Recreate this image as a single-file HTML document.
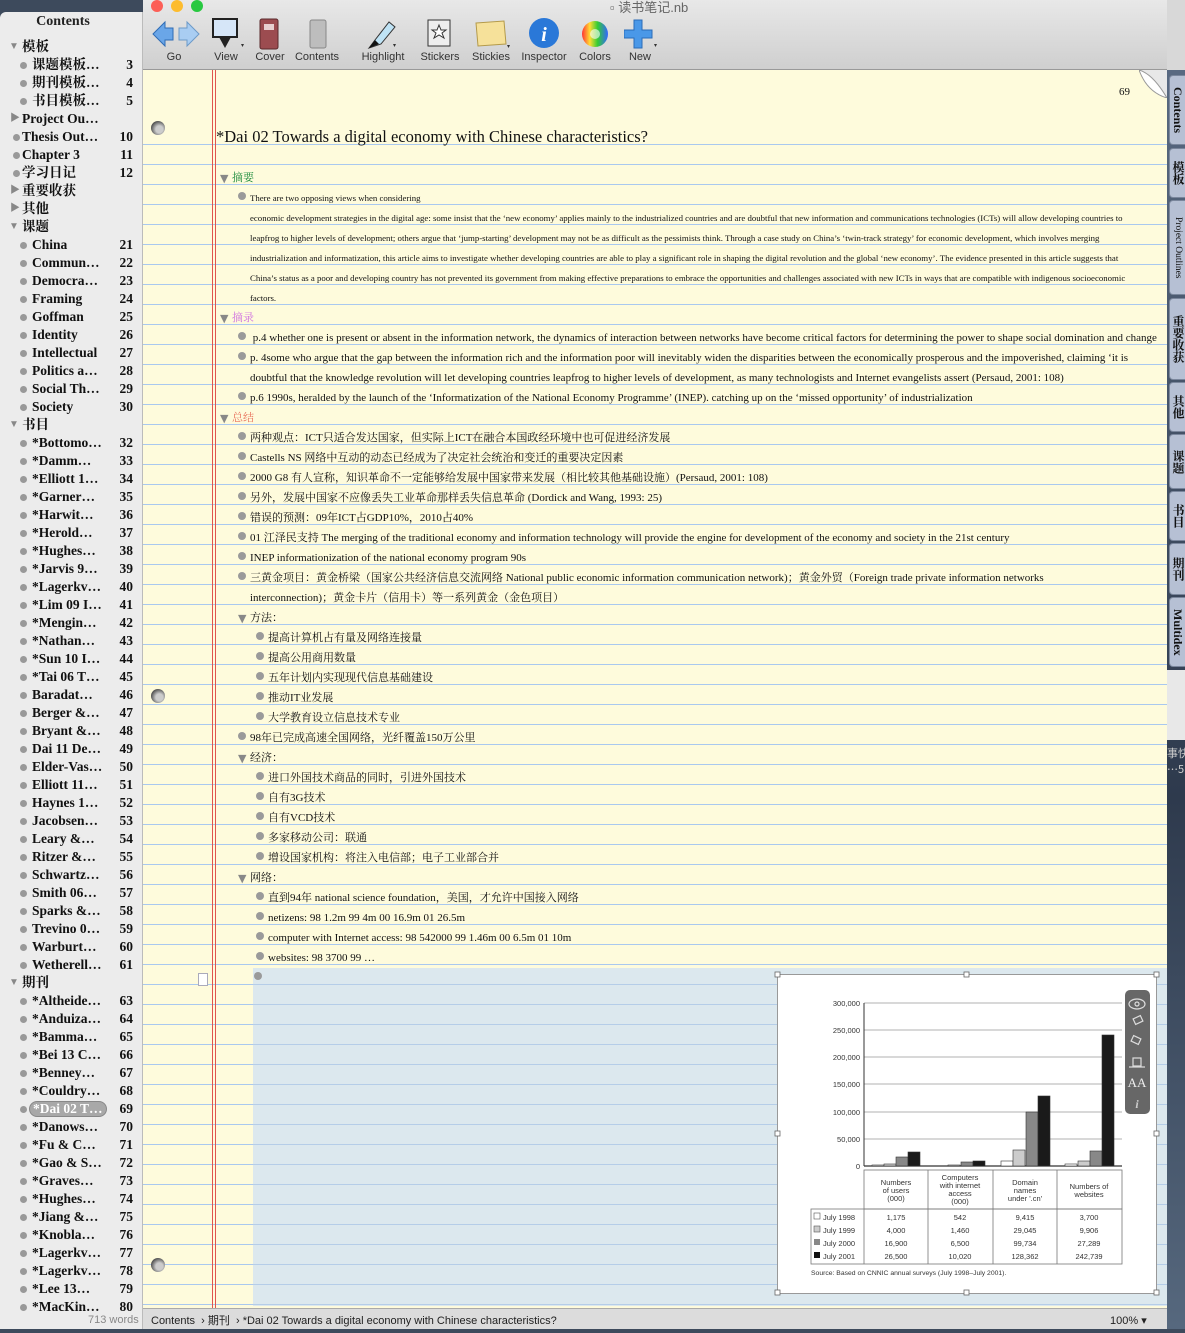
<!DOCTYPE html>
<html><head><meta charset="utf-8">
<style>
*{margin:0;padding:0;box-sizing:border-box}
body{width:1185px;height:1329px;overflow:hidden;position:relative;background:#3d4a5c;font-family:"Liberation Serif","Noto Serif CJK SC",serif;color:#111}
#side{position:absolute;left:0;top:12px;width:143px;height:1317px;background:#ececec;border-radius:6px 0 0 0;border-right:1px solid #bbb}
#side .h{position:absolute;top:2px;left:0;width:126px;text-align:center;font-weight:bold;font-size:14px;color:#222}
.si{position:absolute;height:18px;line-height:18px;font-size:13.5px;font-weight:bold;white-space:nowrap;color:#111}
.si .n{position:absolute;left:0;width:133px;text-align:right}
.b{display:inline-block;width:7px;height:7px;border-radius:50%;background:#999;position:absolute;top:6px}
.tri{position:absolute;font-size:10px;color:#888;top:0}
#tb{position:absolute;left:143px;top:0;width:1024px;height:70px;background:linear-gradient(#e8e8e8,#cfcfcf);border-bottom:1px solid #999}
#tb .lab{position:absolute;top:51px;font-family:"Liberation Sans",sans-serif;font-size:11px;color:#333;transform:translateX(-50%)}
#pg{position:absolute;left:143px;top:70px;width:1024px;height:1238px;background:#fefbdc}
.ln{position:absolute;left:143px;width:1024px;height:1px;background:#a9c8ef}
.row{position:absolute;height:20px;line-height:20px;white-space:nowrap;font-size:11px}
.row .t{position:absolute;top:4px}
.row .bb{position:absolute;top:8px;width:8px;height:8px;border-radius:50%;background:#9a9a9a}
.row .tr{position:absolute;top:5px;font-size:11px;color:#888;font-family:"DejaVu Sans",sans-serif}
.sm{font-size:8.8px}
#st{position:absolute;left:143px;top:1308px;width:1024px;height:21px;background:#dcdcdc;border-top:1px solid #aaa;font-family:"Liberation Sans","Noto Sans CJK SC",sans-serif;font-size:11px;line-height:24px;color:#222}
#rs{position:absolute;left:1167px;top:0;width:18px;height:1329px;background:linear-gradient(#5d6e86,#2e3a4d 60%,#56687e)}
.tab{position:absolute;left:1169px;width:16px;background:#b6c0d4;border:1px solid #7a869c;border-right:none;border-radius:4px 0 0 4px;writing-mode:vertical-rl;font-weight:bold;text-align:center;line-height:14px;color:#111;white-space:nowrap;overflow:hidden}
.dial{position:absolute;width:14px;height:14px;border-radius:50%;background:radial-gradient(circle at 60% 60%,#ccc 30%,#555 70%)}
</style></head><body>

<div id="side">
<div class="h">Contents</div>
</div>
<div id="sideitems"></div>

<div id="tb">
 <div style="position:absolute;left:8px;top:0;width:12px;height:12px;border-radius:50%;background:#fc5f57"></div>
 <div style="position:absolute;left:28px;top:0;width:12px;height:12px;border-radius:50%;background:#fdbc2e"></div>
 <div style="position:absolute;left:48px;top:0;width:12px;height:12px;border-radius:50%;background:#28c840"></div>
 <div style="position:absolute;left:467px;top:-3px;font-family:'Liberation Sans','Noto Sans CJK SC',sans-serif;font-size:13px;color:#666">▫ 读书笔记.nb</div>
 <svg style="position:absolute;left:8px;top:18px" width="50" height="32"><path d="M2 16 L14 4 V10 H22 V22 H14 V28Z" fill="#6aa6e8" stroke="#2f6cb5"/><path d="M48 16 L36 4 V10 H28 V22 H36 V28Z" fill="#a9cdf2" stroke="#6d9ac8"/></svg>
 <svg style="position:absolute;left:68px;top:18px" width="36" height="32"><rect x="2" y="1" width="24" height="18" fill="#d6e6f8" stroke="#222" stroke-width="2"/><path d="M8 19 L14 30 L20 19Z" fill="#222"/><path d="M30 26 l3 0 -1.5 3z" fill="#333"/></svg>
 <svg style="position:absolute;left:115px;top:18px" width="24" height="32"><rect x="2" y="1" width="18" height="30" rx="2" fill="#9c4c50" stroke="#5a2a2c"/><rect x="6" y="6" width="10" height="6" fill="#e8d0d0"/></svg>
 <svg style="position:absolute;left:165px;top:18px" width="20" height="32"><rect x="2" y="2" width="16" height="28" rx="2" fill="#bdbdbd" stroke="#888"/></svg>
 <svg style="position:absolute;left:222px;top:18px" width="34" height="32"><path d="M4 30 L10 22 L24 4 L30 9 L16 26 Z" fill="#bfe3f5" stroke="#333"/><path d="M4 30 L10 22 L14 26Z" fill="#111"/><path d="M28 26 l3 0 -1.5 3z" fill="#333"/></svg>
 <svg style="position:absolute;left:283px;top:18px" width="28" height="30"><rect x="2" y="2" width="22" height="26" fill="#eee" stroke="#333"/><path d="M13 7 l2 5 5 0 -4 3 2 5 -5 -3 -5 3 2 -5 -4 -3 5 0z" fill="#fff" stroke="#333"/></svg>
 <svg style="position:absolute;left:331px;top:20px" width="38" height="30"><path d="M2 3 L30 1 L32 24 L4 26Z" fill="#f6e19a" stroke="#b49a4a"/><path d="M33 25 l3 0 -1.5 3z" fill="#333"/></svg>
 <svg style="position:absolute;left:385px;top:17px" width="32" height="32"><circle cx="16" cy="16" r="15" fill="#2a78d8"/><text x="16" y="24" font-family="Liberation Serif" font-style="italic" font-weight="bold" font-size="20" fill="#fff" text-anchor="middle">i</text></svg>
 <svg style="position:absolute;left:438px;top:20px" width="28" height="28"><defs><linearGradient id="cw" x1="0" x2="1"><stop offset="0" stop-color="#f33"/><stop offset=".3" stop-color="#fd3"/><stop offset=".6" stop-color="#3c3"/><stop offset="1" stop-color="#36f"/></linearGradient></defs><circle cx="14" cy="14" r="13" fill="url(#cw)"/><circle cx="14" cy="14" r="5" fill="#fff" opacity=".6"/></svg>
 <svg style="position:absolute;left:481px;top:18px" width="36" height="32"><path d="M10 2 h8 v10 h10 v8 h-10 v10 h-8 v-10 h-10 v-8 h10z" fill="#4a98e8" stroke="#2a6cb8"/><path d="M30 26 l3 0 -1.5 3z" fill="#333"/></svg>
 <div class="lab" style="left:31px">Go</div><div class="lab" style="left:83px">View</div><div class="lab" style="left:127px">Cover</div><div class="lab" style="left:174px">Contents</div><div class="lab" style="left:240px">Highlight</div><div class="lab" style="left:297px">Stickers</div><div class="lab" style="left:348px">Stickies</div><div class="lab" style="left:401px">Inspector</div><div class="lab" style="left:452px">Colors</div><div class="lab" style="left:497px">New</div>
</div>

<div id="pg"></div>
<div id="lines"></div>
<div style="position:absolute;left:253px;top:968px;width:914px;height:338px;background:#dce8ee"></div>
<div id="lines2"></div>
<div style="position:absolute;left:212px;top:70px;width:1px;height:1238px;background:#e0554f"></div>
<div style="position:absolute;left:215px;top:70px;width:1px;height:1238px;background:#e0554f"></div>
<svg style="position:absolute;left:1139px;top:70px" width="28" height="28"><path d="M0 0 H28 V28Z" fill="#e8e8e8"/><path d="M0 0 Q14 4 28 28 Q8 22 0 0Z" fill="#fff" stroke="#999"/></svg>
<div style="position:absolute;left:1119px;top:86px;font-size:11px">69</div>
<div style="position:absolute;left:216px;top:127px;font-size:16.5px;white-space:nowrap">*Dai 02 Towards a digital economy with Chinese characteristics?</div>
<div class="dial" style="left:151px;top:121px"></div>
<div class="dial" style="left:151px;top:689px"></div>
<div class="dial" style="left:151px;top:1258px"></div>
<div style="position:absolute;left:198px;top:973px;width:10px;height:13px;background:#fff;border:1px solid #aab"></div>
<div id="rows"></div>

<!-- chart -->
<div style="position:absolute;left:777px;top:974px;width:380px;height:320px;background:#fff;border:1px solid #999"></div>
<svg style="position:absolute;left:770px;top:965px" width="400" height="340" font-family="Liberation Sans,sans-serif" font-size="7.5" fill="#333">
 <g stroke="#999" stroke-width=".8">
  <line x1="94" y1="38" x2="352" y2="38"/><line x1="94" y1="65" x2="352" y2="65"/><line x1="94" y1="92" x2="352" y2="92"/><line x1="94" y1="119" x2="352" y2="119"/><line x1="94" y1="147" x2="352" y2="147"/><line x1="94" y1="174" x2="352" y2="174"/>
 </g>
 <line x1="94" y1="38" x2="94" y2="201" stroke="#333"/><line x1="94" y1="201" x2="352" y2="201" stroke="#333" stroke-width="1.2"/>
 <g text-anchor="end"><text x="90" y="41">300,000</text><text x="90" y="68">250,000</text><text x="90" y="95">200,000</text><text x="90" y="122">150,000</text><text x="90" y="150">100,000</text><text x="90" y="177">50,000</text><text x="90" y="204">0</text></g>
 <g stroke="#333" stroke-width=".6">
  <rect x="102" y="200" width="12" height="1" fill="#fff"/><rect x="114" y="199" width="12" height="2" fill="#ccc"/><rect x="126" y="192" width="12" height="9" fill="#888"/><rect x="138" y="187" width="12" height="14" fill="#1a1a1a"/>
  <rect x="178" y="200" width="12" height="1" fill="#ccc"/><rect x="191" y="197" width="12" height="4" fill="#888"/><rect x="203" y="196" width="12" height="5" fill="#1a1a1a"/>
  <rect x="231" y="196" width="12" height="5" fill="#fff"/><rect x="243" y="185" width="12" height="16" fill="#ccc"/><rect x="256" y="147" width="12" height="54" fill="#888"/><rect x="268" y="131" width="12" height="70" fill="#1a1a1a"/>
  <rect x="295" y="199" width="12" height="2" fill="#fff"/><rect x="308" y="196" width="12" height="5" fill="#ccc"/><rect x="320" y="186" width="12" height="15" fill="#888"/><rect x="332" y="70" width="12" height="131" fill="#1a1a1a"/>
 </g>
 <g stroke="#777" fill="none" stroke-width=".8">
  <rect x="94" y="205" width="258" height="39"/><rect x="41" y="244" width="311" height="55"/>
  <line x1="94" y1="244" x2="94" y2="299"/><line x1="158" y1="205" x2="158" y2="299"/><line x1="223" y1="205" x2="223" y2="299"/><line x1="287" y1="205" x2="287" y2="299"/>
 </g>
 <g text-anchor="middle">
  <text x="126" y="220">Numbers</text><text x="126" y="228">of users</text><text x="126" y="236">(000)</text>
  <text x="190" y="215">Computers</text><text x="190" y="223">with internet</text><text x="190" y="231">access</text><text x="190" y="239">(000)</text>
  <text x="255" y="220">Domain</text><text x="255" y="228">names</text><text x="255" y="236">under '.cn'</text>
  <text x="319" y="224">Numbers of</text><text x="319" y="232">websites</text>
  <text x="126" y="255">1,175</text><text x="190" y="255">542</text><text x="255" y="255">9,415</text><text x="319" y="255">3,700</text>
  <text x="126" y="268">4,000</text><text x="190" y="268">1,460</text><text x="255" y="268">29,045</text><text x="319" y="268">9,906</text>
  <text x="126" y="281">16,900</text><text x="190" y="281">6,500</text><text x="255" y="281">99,734</text><text x="319" y="281">27,289</text>
  <text x="126" y="294">26,500</text><text x="190" y="294">10,020</text><text x="255" y="294">128,362</text><text x="319" y="294">242,739</text>
 </g>
 <rect x="44" y="248" width="6" height="6" fill="#fff" stroke="#555" stroke-width=".6"/><rect x="44" y="261" width="6" height="6" fill="#ccc" stroke="#555" stroke-width=".6"/><rect x="44" y="274" width="6" height="6" fill="#888"/><rect x="44" y="287" width="6" height="6" fill="#111"/>
 <text x="53" y="255">July 1998</text><text x="53" y="268">July 1999</text><text x="53" y="281">July 2000</text><text x="53" y="294">July 2001</text>
 <text x="41" y="310" font-size="6.8">Source: Based on CNNIC annual surveys (July 1998–July 2001).</text>
 <g fill="#fff" stroke="#666" stroke-width=".8"><rect x="5" y="7" width="5" height="5"/><rect x="194" y="7" width="5" height="5"/><rect x="384" y="7" width="5" height="5"/><rect x="5" y="166" width="5" height="5"/><rect x="384" y="166" width="5" height="5"/><rect x="5" y="325" width="5" height="5"/><rect x="194" y="325" width="5" height="5"/><rect x="384" y="325" width="5" height="5"/></g>
 <rect x="355" y="25" width="25" height="124" rx="5" fill="#5a5a5a" opacity=".92"/>
 <g stroke="#ddd" fill="none" stroke-width="1.2"><ellipse cx="367" cy="39" rx="8" ry="5"/><circle cx="367" cy="39" r="2"/><rect x="364" y="52" width="8" height="6" transform="rotate(-25 368 55)"/><rect x="362" y="72" width="8" height="6" transform="rotate(25 366 75)"/><line x1="359" y1="102" x2="375" y2="102"/><rect x="363" y="93" width="8" height="8"/></g>
 <text x="367" y="122" fill="#eee" font-family="Liberation Serif" font-size="13" text-anchor="middle">AA</text>
 <text x="367" y="143" fill="#ccc" font-family="Liberation Serif" font-style="italic" font-weight="bold" font-size="12" text-anchor="middle">i</text>
</svg>

<div id="st"><span style="position:absolute;left:8px">Contents &nbsp;›&nbsp;期刊 &nbsp;›&nbsp;*Dai 02 Towards a digital economy with Chinese characteristics?</span><span style="position:absolute;left:967px">100% ▾</span></div>
<div style="position:absolute;left:88px;top:1314px;font-family:'Liberation Sans',sans-serif;font-size:11px;color:#888">713 words</div>

<div id="rs"></div>
<div style="position:absolute;left:1167px;top:0;width:18px;height:70px;background:#d8d8d8"></div>
<div id="tabs"></div>
<div style="position:absolute;left:1167px;top:670px;width:18px;height:70px;background:#e8e8e8"></div>
<div style="position:absolute;left:1167px;top:745px;width:18px;overflow:hidden;font-size:11px;color:#ccc;font-family:'Noto Sans CJK SC',sans-serif;line-height:16px;white-space:nowrap">事快<br>…5</div>

<script>
var S=document.getElementById('sideitems'),h='';
var items=[[0,'t','模板'],[1,'b','课题模板…','3'],[1,'b','期刊模板…','4'],[1,'b','书目模板…','5'],[0,'r','Project Ou…'],[0,'b','Thesis Out…','10'],[0,'b','Chapter 3','11'],[0,'b','学习日记','12'],[0,'r','重要收获'],[0,'r','其他'],[0,'t','课题']];
['China|21','Commun…|22','Democra…|23','Framing|24','Goffman|25','Identity|26','Intellectual|27','Politics a…|28','Social Th…|29','Society|30'].forEach(function(s){var p=s.split('|');items.push([1,'b',p[0],p[1]])});
items.push([0,'t','书目']);
['*Bottomo…|32','*Damm…|33','*Elliott 1…|34','*Garner…|35','*Harwit…|36','*Herold…|37','*Hughes…|38','*Jarvis 9…|39','*Lagerkv…|40','*Lim 09 I…|41','*Mengin…|42','*Nathan…|43','*Sun 10 I…|44','*Tai 06 T…|45','Baradat…|46','Berger &…|47','Bryant &…|48','Dai 11 De…|49','Elder-Vas…|50','Elliott 11…|51','Haynes 1…|52','Jacobsen…|53','Leary &…|54','Ritzer &…|55','Schwartz…|56','Smith 06…|57','Sparks &…|58','Trevino 0…|59','Warburt…|60','Wetherell…|61'].forEach(function(s){var p=s.split('|');items.push([1,'b',p[0],p[1]])});
items.push([0,'t','期刊']);
['*Altheide…|63','*Anduiza…|64','*Bamma…|65','*Bei 13 C…|66','*Benney…|67','*Couldry…|68','*Dai 02 T…|69','*Danows…|70','*Fu &amp; C…|71','*Gao &amp; S…|72','*Graves…|73','*Hughes…|74','*Jiang &amp;…|75','*Knobla…|76','*Lagerkv…|77','*Lagerkv…|78','*Lee 13…|79','*MacKin…|80'].forEach(function(s){var p=s.split('|');items.push([1,'b',p[0],p[1]])});
items.forEach(function(it,i){var y=38+i*18;var lv=it[0];var tx=lv?32:22;var ic='';
 if(it[1]=='t')ic='<span class="tri" style="left:9px">▼</span>';else if(it[1]=='r')ic='<span class="tri" style="left:10px">▶</span>';else ic='<span class="b" style="left:'+(lv?20:13)+'px"></span>';
 var sel=it[3]=='69';
 var lab=sel?'<span style="position:absolute;left:'+(tx-3)+'px;top:1px;background:#a8a8a8;border:1px solid #888;border-radius:8px;color:#fff;padding:0 3px;line-height:14px">'+it[2]+'</span>':'<span style="position:absolute;left:'+tx+'px">'+it[2]+'</span>';
 h+='<div class="si" style="left:0;top:'+y+'px;width:143px">'+ic+lab+(it[3]?'<span class="n">'+it[3]+'</span>':'')+'</div>';});
S.innerHTML=h;
var L='';for(var y=144;y<1306;y+=20){L+='<div class="ln" style="top:'+y+'px"></div>'}document.getElementById('lines').innerHTML=L;
var L2='';for(var y=984;y<1306;y+=20){L2+='<div class="ln" style="top:'+y+'px;left:253px;width:914px;background:#b5cde8"></div>'}document.getElementById('lines2').innerHTML=L2;
var R=[
['tr',220,'<span style="color:#1a8a3a">摘要</span>'],
['b',242,'<span class="sm">There are two opposing views when considering</span>',250],
['n',250,'<span class="sm">economic development strategies in the digital age: some insist that the ‘new economy’ applies mainly to the industrialized countries and are doubtful that new information and communications technologies (ICTs) will allow developing countries to</span>'],
['n',250,'<span class="sm">leapfrog to higher levels of development; others argue that ‘jump-starting’ development may not be as difficult as the pessimists think. Through a case study on China’s ‘twin-track strategy’ for economic development, which involves merging</span>'],
['n',250,'<span class="sm">industrialization and informatization, this article aims to investigate whether developing countries are able to play a significant role in shaping the digital revolution and the global ‘new economy’. The evidence presented in this article suggests that</span>'],
['n',250,'<span class="sm">China’s status as a poor and developing country has not prevented its government from making effective preparations to embrace the opportunities and challenges associated with new ICTs in ways that are compatible with indigenous socioeconomic</span>'],
['n',250,'<span class="sm">factors.</span>'],
['tr',220,'<span style="color:#d070e0">摘录</span>'],
['b',242,'&nbsp;p.4 whether one is present or absent in the information network, the dynamics of interaction between networks have become critical factors for determining the power to shape social domination and change',250],
['b',242,'p. 4some who argue that the gap between the information rich and the information poor will inevitably widen the disparities between the economically prosperous and the impoverished, claiming ‘it is',250],
['n',250,'doubtful that the knowledge revolution will let developing countries leapfrog to higher levels of development, as many technologists and Internet evangelists assert (Persaud, 2001: 108)'],
['b',242,'p.6 1990s, heralded by the launch of the ‘Informatization of the National Economy Programme’ (INEP). catching up on the ‘missed opportunity’ of industrialization',250],
['tr',220,'<span style="color:#e8705a">总结</span>'],
['b',242,'两种观点：ICT只适合发达国家，但实际上ICT在融合本国政经环境中也可促进经济发展',250],
['b',242,'Castells NS 网络中互动的动态已经成为了决定社会统治和变迁的重要决定因素',250],
['b',242,'2000 G8 有人宣称，知识革命不一定能够给发展中国家带来发展（相比较其他基础设施）(Persaud, 2001: 108)',250],
['b',242,'另外，发展中国家不应像丢失工业革命那样丢失信息革命 (Dordick and Wang, 1993: 25)',250],
['b',242,'错误的预测：09年ICT占GDP10%，2010占40%',250],
['b',242,'01 江泽民支持 The merging of the traditional economy and information technology will provide the engine for development of the economy and society in the 21st century',250],
['b',242,'INEP informationization of the national economy program 90s',250],
['b',242,'三黄金项目：黄金桥梁（国家公共经济信息交流网络 National public economic information communication network)；黄金外贸（Foreign trade private information networks',250],
['n',250,'interconnection)；黄金卡片（信用卡）等一系列黄金（金色项目）'],
['tr',238,'方法：',250],
['b',260,'提高计算机占有量及网络连接量',268],['b',260,'提高公用商用数量',268],['b',260,'五年计划内实现现代信息基础建设',268],['b',260,'推动IT业发展',268],['b',260,'大学教育设立信息技术专业',268],
['b',242,'98年已完成高速全国网络，光纤覆盖150万公里',250],
['tr',238,'经济：',250],
['b',260,'进口外国技术商品的同时，引进外国技术',268],['b',260,'自有3G技术',268],['b',260,'自有VCD技术',268],['b',260,'多家移动公司：联通',268],['b',260,'增设国家机构：将注入电信部；电子工业部合并',268],
['tr',238,'网络：',250],
['b',260,'直到94年 national science foundation，美国，才允许中国接入网络',268],['b',260,'netizens: 98 1.2m 99 4m 00 16.9m 01 26.5m',268],['b',260,'computer with Internet access: 98 542000 99 1.46m 00 6.5m 01 10m',268],['b',260,'websites: 98 3700 99 …',268],
['b',258,'',268]];
var H='';R.forEach(function(r,i){var top=164+i*20;var o='<div class="row" style="left:0;top:'+top+'px;width:1167px">';
 if(r[0]=='tr'){o+='<span class="tr" style="left:'+r[1]+'px">▼</span>';var tx=r[3]||232;o+='<span class="t" style="left:'+tx+'px">'+r[2]+'</span>';}
 else if(r[0]=='b'){o+='<span class="bb" style="left:'+(r[1]-4)+'px"></span><span class="t" style="left:'+r[3]+'px">'+r[2]+'</span>';}
 else o+='<span class="t" style="left:'+r[1]+'px">'+r[2]+'</span>';
 H+=o+'</div>';});
document.getElementById('rows').innerHTML=H;
var T=[['Contents',75,70,'12px'],['模板',148,50,'12px'],['Project Outlines',200,95,'9.5px;font-weight:normal'],['重要收获',298,82,'12px'],['其他',382,50,'12px'],['课题',434,55,'12px'],['书目',491,50,'12px'],['期刊',543,52,'12px'],['Multidex',597,70,'12px']];
var TB='';T.forEach(function(t){TB+='<div class="tab" style="top:'+t[1]+'px;height:'+t[2]+'px;font-size:'+t[3]+'">'+t[0]+'</div>'});document.getElementById('tabs').innerHTML=TB;
</script>
</body></html>
